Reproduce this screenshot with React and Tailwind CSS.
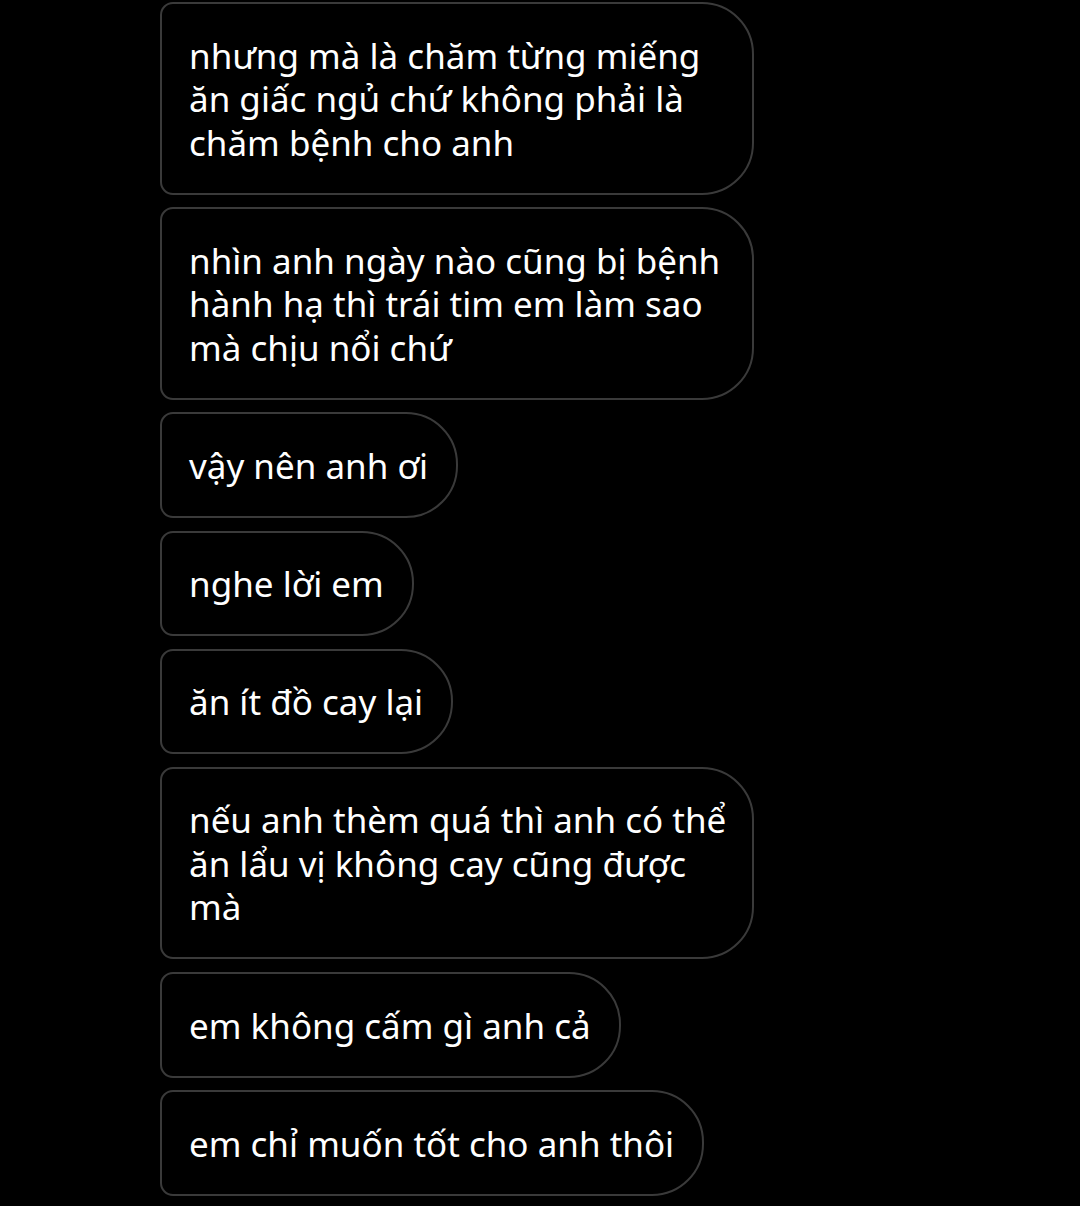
const messages = [
  ['nhưng mà là chăm từng miếng', 'ăn giấc ngủ chứ không phải là', 'chăm bệnh cho anh'],
  ['nhìn anh ngày nào cũng bị bệnh', 'hành hạ thì trái tim em làm sao', 'mà chịu nổi chứ'],
  ['vậy nên anh ơi'],
  ['nghe lời em'],
  ['ăn ít đồ cay lại'],
  ['nếu anh thèm quá thì anh có thể', 'ăn lẩu vị không cay cũng được', 'mà'],
  ['em không cấm gì anh cả'],
  ['em chỉ muốn tốt cho anh thôi'],
]

function Bubble({ lines }) {
  const multi = lines.length > 1
  return (
    <div
      className={`border-2 border-[#3a3a3a] rounded-l-[13px] rounded-r-[52px] pl-[27px] pr-[28px] pt-[29.5px] pb-[28.5px] text-white text-[35px] leading-[43.5px] ${multi ? 'w-[594px]' : ''}`}
    >
      {lines.map((l, i) => (
        <div key={i} className="whitespace-nowrap">{l}</div>
      ))}
    </div>
  )
}

export default function App() {
  return (
    <div
      className="min-h-[1206px] bg-black pl-[160px] pt-[2px] flex flex-col items-start gap-[12.7px]"
      style={{ fontFamily: '"Noto Sans", "Open Sans", sans-serif' }}
    >
      {messages.map((m, i) => (
        <Bubble key={i} lines={m} />
      ))}
    </div>
  )
}
